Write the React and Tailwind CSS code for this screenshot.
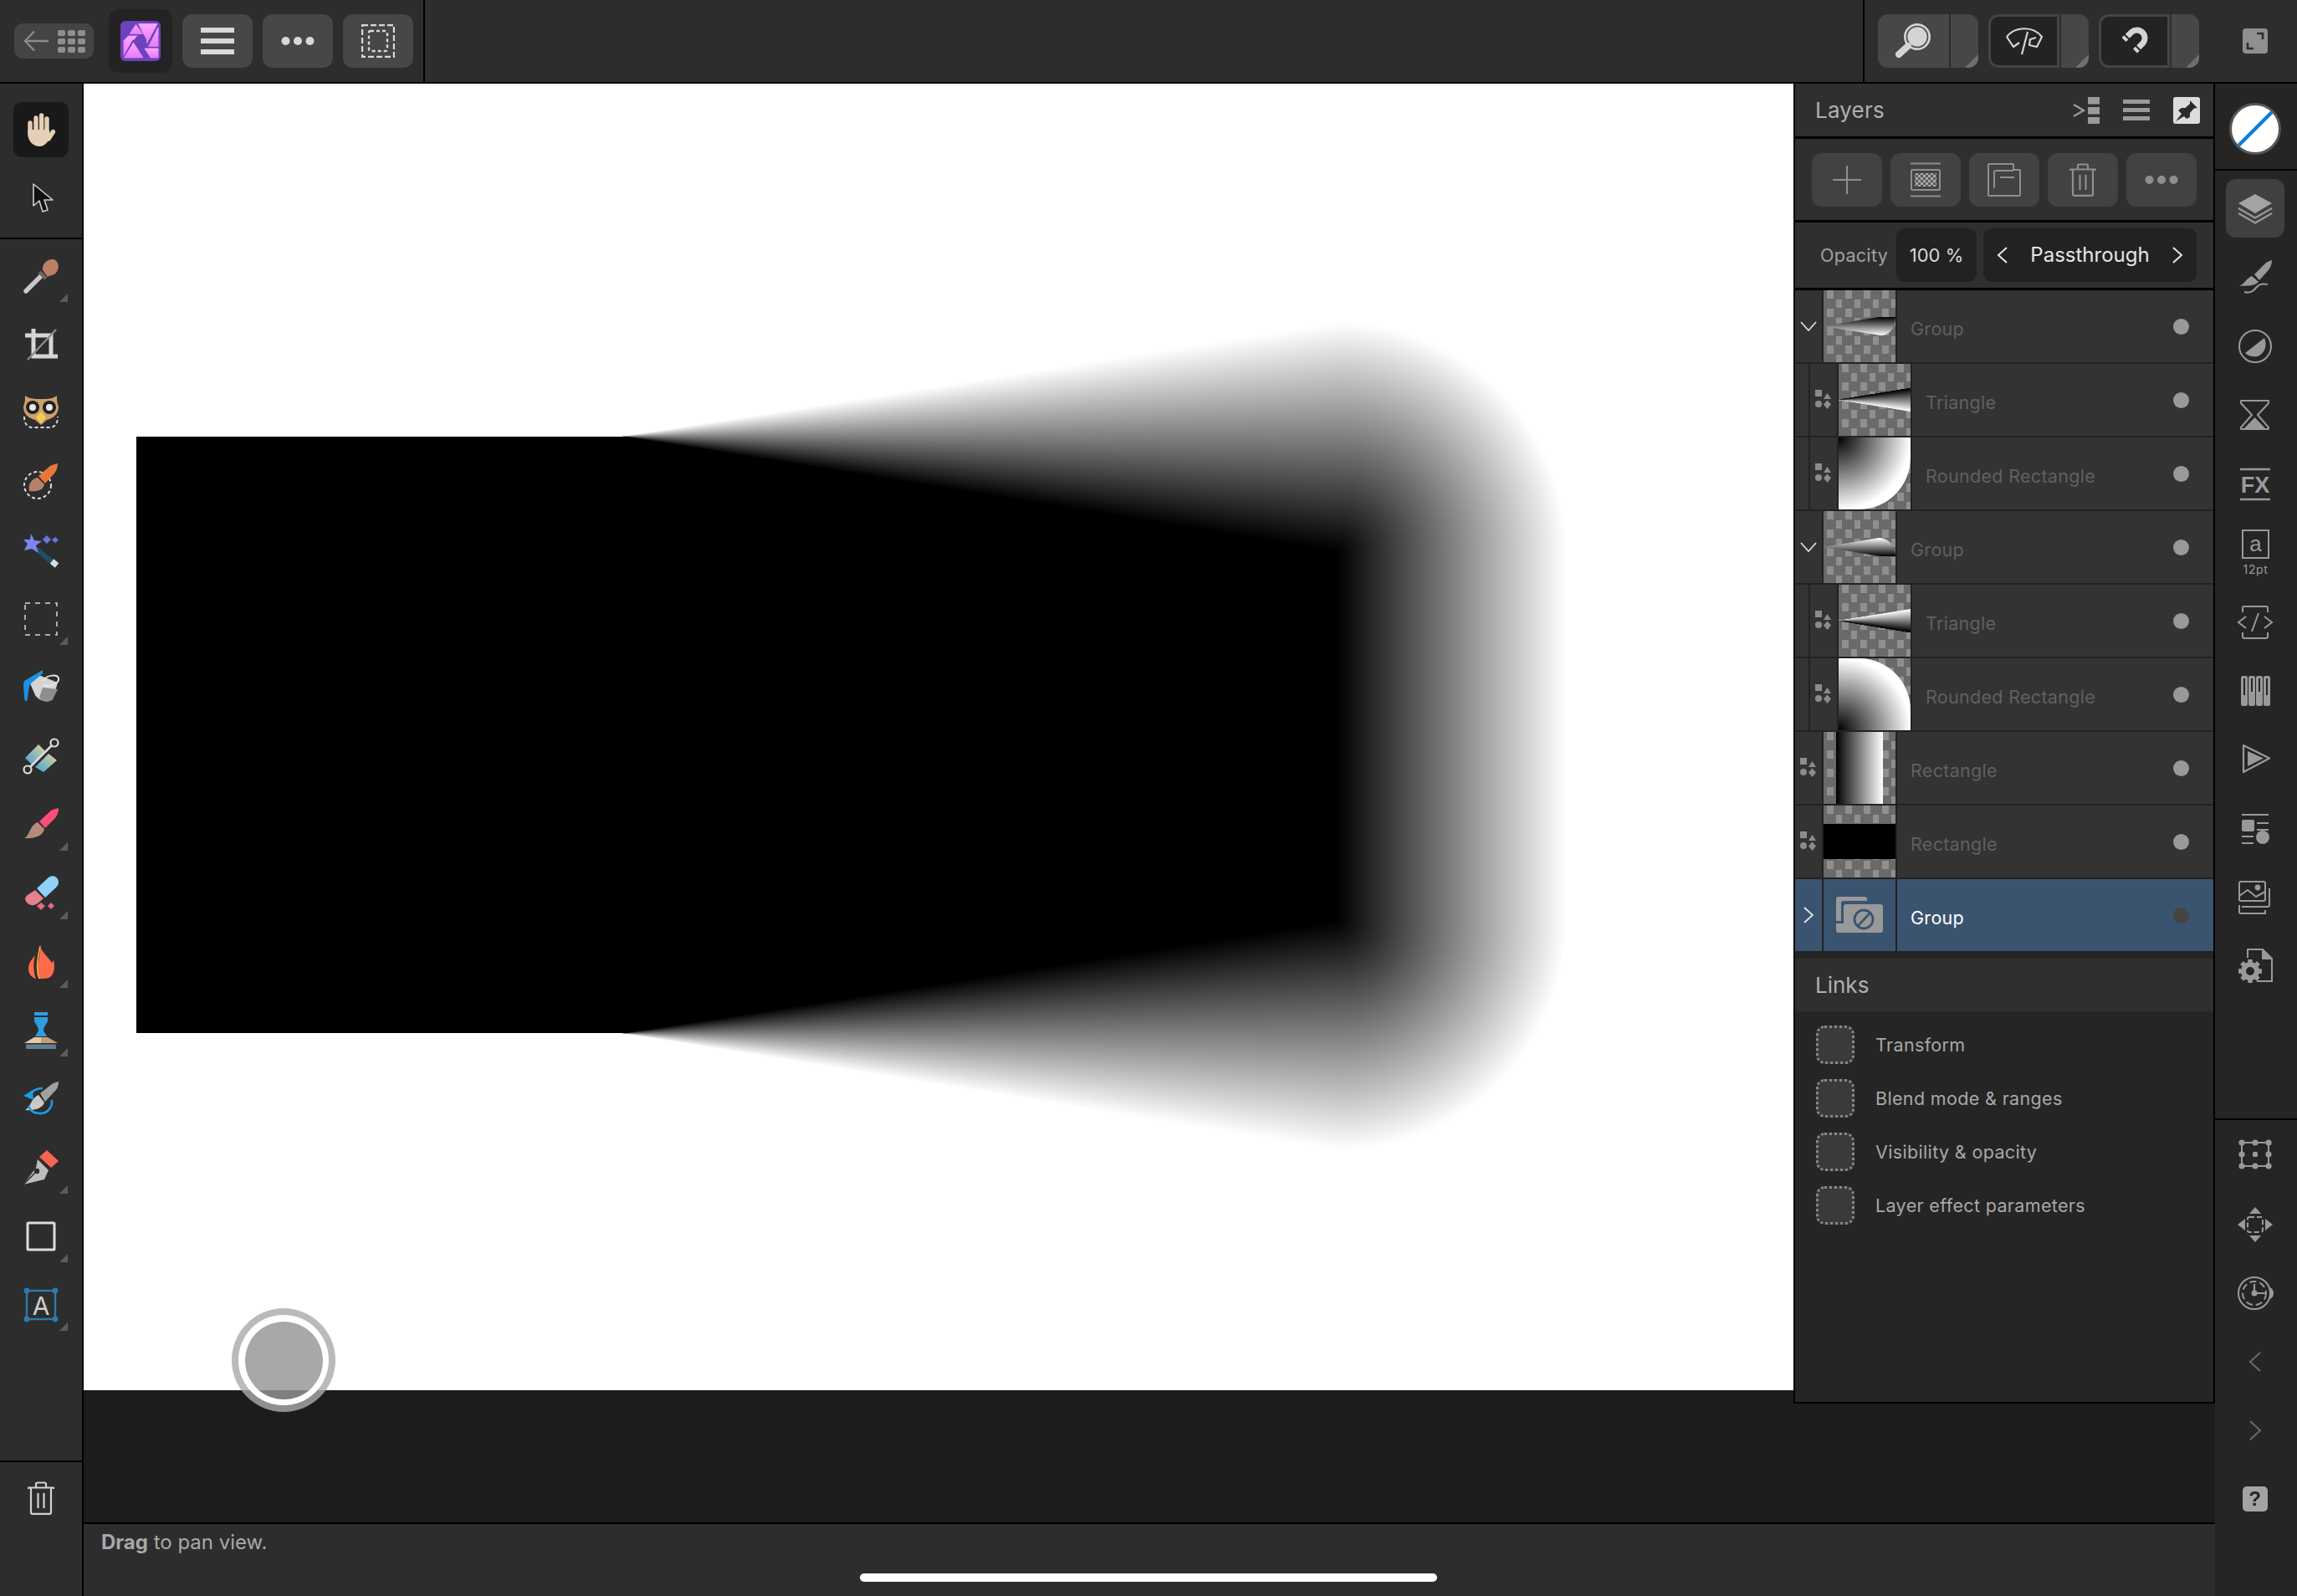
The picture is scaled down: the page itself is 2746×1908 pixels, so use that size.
import React from "react";

const lerp = (a, b, t) => Math.round(a + (b - a) * t);
const gray = (v) => `rgb(${v},${v},${v})`;

function Wedge({ tip, x, y1, y2, c1 = 0, c2 = 255, n = 120 }) {
  const out = [];
  for (let i = n - 1; i >= 0; i--) {
    const b = y1 + ((y2 - y1) * (i + 1)) / n;
    const col = gray(lerp(c1, c2, (i + 0.5) / n));
    out.push(<polygon key={i} points={`${tip[0]},${tip[1]} ${x},${b} ${x},${y1}`} fill={col} />);
  }
  return <g>{out}</g>;
}

function Artwork() {
  const R = 275;
  const X = 1598;
  const T = 660;
  const B = 1100;
  return (
    <svg className="block w-full h-full" viewBox="100 100 2044 1562">
      <defs>
        <radialGradient id="cT" gradientUnits="userSpaceOnUse" cx={X} cy={T} r={R}>
          <stop offset="0" stopColor="#000" /><stop offset="1" stopColor="#fff" />
        </radialGradient>
        <radialGradient id="cB" gradientUnits="userSpaceOnUse" cx={X} cy={B} r={R}>
          <stop offset="0" stopColor="#000" /><stop offset="1" stopColor="#fff" />
        </radialGradient>
        <linearGradient id="cM" gradientUnits="userSpaceOnUse" x1={X} y1="0" x2={X + R} y2="0">
          <stop offset="0" stopColor="#000" /><stop offset="1" stopColor="#fff" />
        </linearGradient>
      </defs>
      <rect x="100" y="100" width="2044" height="1562" fill="#fff" />
      <Wedge tip={[744, 522]} x={X} y1={T} y2={T - R} n={255} />
      <Wedge tip={[744, 1235]} x={X} y1={B} y2={B + R} n={255} />
      <path d={`M${X} ${T}V${T - R}A${R} ${R} 0 0 1 ${X + R} ${T}Z`} fill="url(#cT)" />
      <path d={`M${X} ${B}V${B + R}A${R} ${R} 0 0 0 ${X + R} ${B}Z`} fill="url(#cB)" />
      <rect x={X} y={T} width={R} height={B - T} fill="url(#cM)" />
      <polygon points={`163,522 744,522 ${X},${T} ${X},${B} 744,1235 163,1235`} fill="#000" />
    </svg>
  );
}

function Corner() {
  return (
    <svg className="absolute left-[71px] top-[62px]" width="10" height="10" viewBox="0 0 10 10">
      <polygon points="10,0 10,10 0,10" fill="#5c5c5c" />
    </svg>
  );
}

function Tool({ children, corner, className = "" }) {
  return (
    <div className={`relative h-[82px] w-full flex items-center justify-center ${className}`}>
      {children}
      {corner && <Corner />}
    </div>
  );
}

const I = ({ children, s = 44, vb, className = "" }) => (
  <svg width={s} height={s} viewBox={vb || `0 0 ${s} ${s}`} fill="none" className={className}>{children}</svg>
);

/* left tools */
const Hand = () => (
  <svg width="33" height="40" viewBox="0 0 33 40">
    <g stroke="#e5cfb8" strokeWidth="5.4" strokeLinecap="round">
      <path d="M3 12V26M10 6V26M16.6 3V26M23 7V26M25 31L30.5 22.5" />
    </g>
    <path d="M.5 20V26C.5 34 7 40 14.5 40C21 40 24 34 27.5 29L25.8 20Z" fill="#e5cfb8" />
  </svg>
);
const Cursor = () => (
  <svg width="28" height="38" viewBox="0 0 28 38" className="ml-[3px]">
    <path d="M3 2V28L10 22L14 35L20 33L16 21H26Z" fill="#111" stroke="#d0d0d0" strokeWidth="1.6" strokeLinejoin="round" />
  </svg>
);
const Picker = () => (
  <I s={44}>
    <path d="M4 40L23 21" stroke="#c8c8c8" strokeWidth="5.5" strokeLinecap="round" />
    <path d="M20 17L28 25" stroke="#666" strokeWidth="4.5" />
    <path d="M24 15C23 7 30 1 37 2C43 4 45 12 40 18C37 22 32 21 30 23Z" fill="#bb7f63" />
  </I>
);
const Crop = () => (
  <I s={44}>
    <path d="M3 11H34V34M13 3V36H42" stroke="#d6d6d6" strokeWidth="5" />
    <path d="M6 40L40 4" stroke="#8c8c8c" strokeWidth="2.4" />
  </I>
);
const Owl = () => (
  <I s={44}>
    <path d="M3 1C8 5 14 5 22 5C30 5 36 5 41 1C41 6 41 9 43 14C43 24 36 28 29 30L22 36L15 30C8 28 1 24 1 14C3 9 3 6 3 1Z" fill="#cf9f6c" />
    <circle cx="12" cy="15" r="8" fill="#222" /><circle cx="32" cy="15" r="8" fill="#222" />
    <circle cx="12" cy="15" r="4" fill="#e8e8e8" /><circle cx="32" cy="15" r="4" fill="#e8e8e8" />
    <path d="M16 27L22 20L28 27L22 34Z" fill="#efce4f" />
    <path d="M2 26C2 35 6 39 12 39H32C38 39 42 35 42 26" stroke="#ddd" strokeWidth="2" strokeDasharray="4 3" />
  </I>
);
const BrushSel = () => (
  <I s={44}>
    <circle cx="18" cy="26" r="16" stroke="#ddd" strokeWidth="2" strokeDasharray="4 3" />
    <path d="M19 15L33 3C37 1 42 0 42 0C42 4 41 8 38 12L27 24Z" fill="#e8763a" />
    <path d="M18 17L26 25C25 32 17 34 8 33C6 25 11 18 18 17Z" fill="#b9806a" />
  </I>
);
const Wand = () => (
  <I s={44}>
    <path d="M16 20L38 38" stroke="#1f4f68" strokeWidth="6" />
    <path d="M35 35L41 40" stroke="#ddd" strokeWidth="7" />
    <path d="M10 2L14 10L23 11L16 16L19 25L11 20L2 22L6 14L1 9L9 9Z" fill="#7c86f2" />
    <path d="M29 4L34 9L29 14L24 9Z M39 6L43 9.5L39 13L35 9.5Z" fill="#6a74e6" />
  </I>
);
const Marquee = () => (
  <svg width="40" height="40" viewBox="0 0 40 40" fill="none">
    <rect x="1" y="1" width="38" height="38" stroke="#d8d8d8" strokeWidth="1.5" strokeDasharray="6 6" />
  </svg>
);
const Fill = () => (
  <I s={44}>
    <path d="M17 6L42 16L36 36C30 41 20 38 15 31L9 17Z" fill="#d4d4d4" />
    <path d="M24 22L42 24L36 36C30 41 22 38 20 34Z" fill="#8e8e8e" />
    <path d="M24 14C30 6 42 6 43 11C44 16 34 22 24 19" stroke="#e4e4e4" strokeWidth="2" />
    <path d="M24 1L2 14C0 18 2 28 2 32C2 38 4 40 5 38C7 34 6 26 9 18L24 5Z" fill="#1b92e4" />
  </I>
);
const Heal = () => (
  <I s={44}>
    <defs>
      <linearGradient id="hA" x1="1" y1="0" x2="0" y2="1"><stop offset="0" stopColor="#ecd39b" /><stop offset="1" stopColor="#3aa0d8" /></linearGradient>
    </defs>
    <path d="M3 24L19 8L28 17L12 33Z" fill="url(#hA)" />
    <path d="M15 35L31 19L41 27L25 41Z" fill="url(#hA)" />
    <path d="M9 35L35 9" stroke="#ddd" strokeWidth="2.5" />
    <circle cx="38" cy="6" r="4.5" stroke="#ddd" strokeWidth="2.2" fill="#2d2d2d" />
    <circle cx="6" cy="38" r="4.5" stroke="#ddd" strokeWidth="2.2" fill="#2d2d2d" />
  </I>
);
const Brush = () => (
  <I s={44}>
    <path d="M20 18L34 5C38 3 43 2 43 2C43 6 42 11 38 15L27 26Z" fill="#fb4e7a" />
    <path d="M18 19L26 27C25 35 14 39 2 38C9 35 8 23 18 19Z" fill="#b58a78" />
  </I>
);
const Eraser = () => (
  <I s={44}>
    <path d="M17 16L31 3C35 0 40 1 42 5C44 9 43 12 40 15L27 27Z" fill="#8fd1fb" />
    <path d="M15 18L25 28L18 34C14 37 9 37 5 33C2 29 3 26 6 24Z" fill="#e67f90" />
    <path d="M22 33L27 37L22 42L17 37Z M34 33L38 37L34 41L30 37Z" fill="#e2697f" />
  </I>
);
const Flame = () => (
  <svg width="32" height="40" viewBox="0 0 32 40" fill="none">
    <path d="M15 0C16 8 25 14 29 21L31 18C33 26 32 34 27 38C24 40 18 40 14 40C12 36 11 28 13 20C14 13 16 7 15 0Z" fill="#ff6a4c" />
    <path d="M10 8C10 14 1 18 1 28C1 34 5 39 10 40C7 32 6 20 10 8Z" fill="#ff6a4c" />
    <path d="M15 1C13 12 9 28 14 40" stroke="#f4a23a" strokeWidth="1.8" />
  </svg>
);
const Stamp = () => (
  <I s={44}>
    <path d="M14 0H30V4H14Z M14 6H30V11C27 16 25 19 25 21C25 24 28 26 29 29H15C16 26 19 24 19 21C19 19 17 16 14 11Z" fill="#2f9ee0" />
    <path d="M14 30H22V37H2Z" fill="#e3c9ab" /><path d="M22 30H30L42 37H22Z" fill="#c69e77" />
    <rect x="4" y="38.5" width="36" height="5.5" rx="1.5" fill="#5f7f99" />
  </I>
);
const Undo = () => (
  <I s={44}>
    <path d="M21 15L35 4C38 2 43 1 43 1C43 5 42 10 38 13L27 25Z" fill="#a0a0a0" />
    <path d="M19 17L26 26C24 33 14 36 3 35C10 32 9 22 19 17Z" fill="#c9c9c9" />
    <path d="M35 23C36 31 30 40 20 39C14 39 9 36 7 30M11 14C15 10 20 9 24 9" stroke="#189ee8" strokeWidth="2.6" />
    <path d="M1 18L12 11L13 23Z" fill="#189ee8" />
  </I>
);
const Pen = () => (
  <I s={44}>
    <path d="M29 1L43 14L34 22L20 9Z" fill="#f6654f" />
    <path d="M18 12L31 25L26 36L1 42L16 22Z" fill="#bdbdbd" />
    <path d="M1 42L16 27" stroke="#2d2d2d" strokeWidth="1.6" />
    <circle cx="17" cy="26" r="3.2" fill="#2d2d2d" />
  </I>
);
const RectT = () => (
  <svg width="36" height="36" viewBox="0 0 36 36" fill="none"><rect x="2" y="2" width="32" height="32" rx="1" stroke="#ddd" strokeWidth="3" /></svg>
);
const TextT = () => (
  <svg width="42" height="42" viewBox="0 0 42 42" fill="none">
    <rect x="4" y="4" width="34" height="34" stroke="#2a7bab" strokeWidth="2.4" />
    <g fill="#2a7bab"><circle cx="4" cy="4" r="3.4" /><circle cx="38" cy="4" r="3.4" /><circle cx="4" cy="38" r="3.4" /><circle cx="38" cy="38" r="3.4" /></g>
    <text x="21" y="33" textAnchor="middle" fontFamily="Inter, sans-serif" fontSize="30" fill="#ccc">A</text>
  </svg>
);
const Trash = ({ c = "#d2d2d2" }) => (
  <svg width="32" height="40" viewBox="0 0 32 40" fill="none" stroke={c} strokeWidth="2.2" strokeLinejoin="round">
    <path d="M1 9V7.5H31V9" /><path d="M10 7V3C10 2 11 1.5 12 1.5H20C21 1.5 22 2 22 3V7" />
    <path d="M4 8V37C4 38 5 38.8 6 38.8H26C27 38.8 28 38 28 37V8" /><path d="M12.5 14V32M19.5 14V32" />
  </svg>
);

/* right column */
const Ic = ({ children }) => <svg width="44" height="44" viewBox="0 0 44 44" fill="none">{children}</svg>;
const c = "#999";
const RLayers = () => (
  <Ic>
    <path d="M22 5L42 16L22 28L2 16Z" fill="#a3a3a3" />
    <path d="M2 22L22 33.5L42 22M2 28L22 39.5L42 28" stroke={c} strokeWidth="2.2" />
  </Ic>
);
const RBrush = () => (
  <Ic>
    <path d="M21 18L34 5C38 2 42 1 42 1C42 6 40 11 36 15L27 25Z" fill={c} />
    <path d="M18 20L26 27C20 33 11 31 3 32C10 29 11 23 18 20Z" fill={c} />
    <path d="M9 39C16 41 20 38 24 33C27 29 32 29 37 30" stroke={c} strokeWidth="2.2" />
  </Ic>
);
const RAdjust = () => (
  <Ic>
    <circle cx="22" cy="22" r="19" stroke={c} strokeWidth="2" />
    <path d="M10 30L33 12C37 21 33 31 25 34C19 35 14 34 10 30Z" fill={c} />
  </Ic>
);
const RGlass = () => (
  <Ic>
    <path d="M5 5H38L38 8L25 22L38 37V39H5V37L18 22L5 8Z" stroke={c} strokeWidth="2" strokeLinejoin="round" />
    <path d="M21.5 25L34 38H9Z" fill={c} />
  </Ic>
);
const RFx = () => (
  <Ic>
    <path d="M4 4H40M4 40H40" stroke={c} strokeWidth="2.4" />
    <text x="22" y="32" textAnchor="middle" fontFamily="Liberation Sans, sans-serif" fontWeight="700" fontSize="27" fill={c}>FX</text>
  </Ic>
);
const RType = () => (
  <svg width="44" height="56" viewBox="0 0 44 56" fill="none">
    <rect x="7" y="1" width="31" height="33" stroke={c} strokeWidth="2" />
    <text x="22.5" y="26" textAnchor="middle" fontFamily="Liberation Sans, sans-serif" fontSize="26" fill={c}>a</text>
    <text x="22.5" y="53" textAnchor="middle" fontFamily="Inter, sans-serif" fontSize="14" letterSpacing="0.6" fill={c}>12pt</text>
  </svg>
);
const RCode = () => (
  <Ic>
    <path d="M7 10V5C7 4 8 3 9 3H35C36 3 37 4 37 5V10M7 34V39C7 40 8 41 9 41H35C36 41 37 40 37 39V34" stroke={c} strokeWidth="2" />
    <path d="M11 15L2 22L11 29M33 15L42 22L33 29M26 11L18 33" stroke={c} strokeWidth="2" />
  </Ic>
);
const RPiano = () => (
  <Ic>
    <g fill={c}>
      <rect x="5" y="4" width="8" height="36" rx="2.5" /><rect x="14" y="4" width="8" height="36" rx="2.5" /><rect x="23" y="4" width="8" height="36" rx="2.5" /><rect x="32" y="4" width="8" height="36" rx="2.5" />
    </g>
    <g fill="#252525"><rect x="8" y="7" width="2" height="20" /><rect x="17" y="7" width="2" height="16" /><rect x="26" y="7" width="2" height="16" /><rect x="35" y="7" width="2" height="20" /></g>
  </Ic>
);
const RPlay = () => (
  <Ic>
    <path d="M8 5L39 20.5L8 37Z" stroke={c} strokeWidth="2.2" strokeLinejoin="round" />
    <path d="M13 12L32 20.5L13 30Z" fill={c} />
  </Ic>
);
const RLayout = () => (
  <Ic>
    <path d="M6 5H38M24 15H38M24 23H38M6 31H20M6 39H20" stroke={c} strokeWidth="2" />
    <rect x="6" y="11" width="15" height="14" rx="2" fill={c} /><circle cx="31" cy="32" r="8" fill={c} />
  </Ic>
);
const RImage = () => (
  <Ic>
    <rect x="3" y="3" width="31" height="23" rx="2" stroke={c} strokeWidth="2" />
    <path d="M3 20L13 13L23 21L34 15" stroke={c} strokeWidth="2" />
    <circle cx="25" cy="10" r="3.4" fill={c} />
    <path d="M39 11V31C39 32 38 33 37 33H6M3 31V39C3 40 4 41 5 41H34V37" stroke={c} strokeWidth="2" />
  </Ic>
);
const RGear = () => (
  <Ic>
    <path d="M13 12V2H31L42 13V40H24" stroke={c} strokeWidth="2" />
    <path d="M31 2V13H42" fill={c} stroke={c} strokeWidth="2" strokeLinejoin="round" />
    <circle cx="16" cy="28" r="8" stroke={c} strokeWidth="6" />
    <g stroke={c} strokeWidth="5.5"><path d="M16 14V42M2 28H30M6 18L26 38M26 18L6 38" strokeDasharray="4 20" /></g>
  </Ic>
);
const RTransform = () => (
  <Ic>
    <rect x="6" y="6" width="32" height="28" stroke={c} strokeWidth="2" />
    <g fill={c}>
      <circle cx="6" cy="6" r="3.6" /><circle cx="22" cy="6" r="3.6" /><circle cx="38" cy="6" r="3.6" />
      <circle cx="6" cy="20" r="3.6" /><circle cx="38" cy="20" r="3.6" />
      <circle cx="6" cy="34" r="3.6" /><circle cx="22" cy="34" r="3.6" /><circle cx="38" cy="34" r="3.6" />
      <rect x="19" y="17" width="6" height="6" rx="1.5" />
    </g>
  </Ic>
);
const RMove = () => (
  <Ic>
    <path d="M22 1L29 9H15ZM22 43L15 35H29ZM1 22L10 15V29ZM43 22L34 15V29Z" fill={c} />
    <rect x="13" y="13" width="18" height="18" rx="2" stroke={c} strokeWidth="2" strokeDasharray="6 3" />
  </Ic>
);
const RClock = () => (
  <Ic>
    <circle cx="21" cy="22" r="19" stroke={c} strokeWidth="2" />
    <circle cx="21" cy="22" r="14" stroke={c} strokeWidth="2" strokeDasharray="8 4" />
    <path d="M21 11V22H34" stroke={c} strokeWidth="2.2" /><circle cx="21" cy="22" r="3.5" fill={c} />
    <path d="M40 15C43 17 44 19 44 22C44 25 43 27 40 29Z" fill={c} />
  </Ic>
);
const RChevL = () => <svg width="16" height="24" viewBox="0 0 16 24" fill="none"><path d="M14 1L2 12L14 23" stroke="#6a6a6a" strokeWidth="2" /></svg>;
const RChevR = () => <svg width="16" height="24" viewBox="0 0 16 24" fill="none"><path d="M2 1L14 12L2 23" stroke="#6a6a6a" strokeWidth="2" /></svg>;
const RHelp = () => (
  <div className="w-[30px] h-[30px] rounded-[5px] bg-[#a3a3a3] flex items-center justify-center text-[#252525] text-[24px] font-bold leading-none font-['Liberation_Sans',sans-serif]">?</div>
);

/* top bar icons */
const Logo = () => (
  <svg width="48" height="48" viewBox="0 0 48 48">
    <defs>
      <linearGradient id="logoP" x1="0" y1="0" x2="0" y2="1"><stop offset="0" stopColor="#fba6ff" /><stop offset="1" stopColor="#e97af7" /></linearGradient>
    </defs>
    <rect width="48" height="48" rx="6" fill="#6c42bd" />
    <g fill="url(#logoP)" stroke="url(#logoP)" strokeWidth="0.8" strokeLinejoin="round">
      <polygon points="18.5,4.5 26.5,15.5 11,15.5" />
      <polygon points="21.5,3.5 44,3.5 31.5,27 29,18 " />
      <polygon points="45,8 45,30.5 33.5,30.5" />
      <polygon points="29,33 45,33 45,44 36,44" />
      <polygon points="15.5,26 27,44 4.5,44" />
      <polygon points="4,23.5 9.5,18 21,18 17.5,21.5 14,23 4,41" />
    </g>
    <circle cx="24" cy="24" r="6.5" fill="none" stroke="#6c42bd" strokeWidth="1.4" />
  </svg>
);
const BackGrid = () => (
  <div className="w-[95px] h-[42px] rounded-[10px] bg-[#444] flex items-center pl-[11px] gap-[11px] shrink-0">
    <svg width="30" height="26" viewBox="0 0 30 26" fill="none"><path d="M30 13H2M13 1.5L2 13L13 24.5" stroke="#8a8a8a" strokeWidth="2.4" /></svg>
    <div className="grid grid-cols-3 gap-[3px]">
      {Array.from({ length: 9 }).map((_, i) => <div key={i} className="w-[9px] h-[7px] rounded-[2px] bg-[#8f8f8f]" />)}
    </div>
  </div>
);
const TopBtn = ({ children }) => (
  <div className="w-[84px] h-[64px] rounded-[12px] bg-[#474747] flex items-center justify-center shrink-0">{children}</div>
);
const Combo = ({ children, active }) => (
  <div className="w-[120px] h-[64px] flex gap-[2px] shrink-0">
    <div className={`w-[85px] h-full rounded-l-[12px] flex items-center justify-center ${active ? "bg-[#232323] border-[3px] border-[#444]" : "bg-[#474747]"}`}>{children}</div>
    <div className="relative flex-1 rounded-r-[12px] bg-[#474747] overflow-hidden">
      <svg className="absolute right-0 bottom-0" width="16" height="16" viewBox="0 0 16 16"><polygon points="16,0 16,16 0,16" fill="#6e6e6e" /></svg>
    </div>
  </div>
);
const Dots = ({ col }) => (
  <svg width="40" height="12" viewBox="0 0 40 12"><g fill={col}><circle cx="5.5" cy="6" r="5" /><circle cx="20" cy="6" r="5" /><circle cx="34.5" cy="6" r="5" /></g></svg>
);

function TopBar() {
  return (
    <div className="h-[100px] shrink-0 bg-[#2d2d2d] border-b-2 border-black flex items-stretch">
      <div className="flex items-center pl-[17px] pr-[12px] border-r-2 border-black">
        <BackGrid />
        <div className="ml-[18px] w-[76px] h-[76px] rounded-[12px] bg-[#232323] flex items-center justify-center shrink-0"><Logo /></div>
        <div className="ml-[12px] flex gap-[12px]">
          <TopBtn>
            <div className="w-[40px] flex flex-col gap-[7px]">
              <div className="h-[6px] bg-[#d8d8d8]" /><div className="h-[6px] bg-[#d8d8d8]" /><div className="h-[6px] bg-[#d8d8d8]" />
            </div>
          </TopBtn>
          <TopBtn><Dots col="#d8d8d8" /></TopBtn>
          <TopBtn>
            <svg width="40" height="40" viewBox="0 0 40 40" fill="none" stroke="#d8d8d8">
              <rect x="1" y="1" width="38" height="38" strokeWidth="2.4" strokeDasharray="7 3" />
              <rect x="9" y="8" width="22" height="24" rx="2" strokeWidth="2.4" strokeDasharray="4 3" />
            </svg>
          </TopBtn>
        </div>
      </div>
      <div className="flex-1" />
      <div className="flex items-center border-l-2 border-black pl-[16px]">
        <div className="flex gap-[12px]">
          <Combo>
            <svg width="44" height="44" viewBox="0 0 44 44" fill="none">
              <circle cx="26" cy="17" r="14" fill="#d4d4d4" stroke="#d4d4d4" strokeWidth="4" />
              <circle cx="26" cy="17" r="12.5" stroke="#474747" strokeWidth="1.6" />
              <path d="M15 28L4 38" stroke="#d4d4d4" strokeWidth="8" strokeLinecap="round" />
            </svg>
          </Combo>
          <Combo active>
            <svg width="44" height="34" viewBox="0 0 44 34" fill="none" stroke="#d4d4d4" strokeWidth="2.2">
              <path d="M1 12C10 0 32 -2 43 12L37 24L28 22L29 15L36 13M1 12L9 24L16 19" strokeLinejoin="round" />
              <path d="M26 6L19 33" />
            </svg>
          </Combo>
          <Combo active>
            <svg width="34" height="34" viewBox="0 0 34 34" fill="none">
              <path d="M4 15.5L13.3 6.3A9.5 9.5 0 0 1 26.7 19.7L17.5 29" stroke="#d4d4d4" strokeWidth="7" />
              <path d="M4 8.5L11 15.5M17.5 22L24.5 29" stroke="#232323" strokeWidth="2" />
            </svg>
          </Combo>
        </div>
        <div className="ml-[52px] mr-[35px] w-[30px] h-[30px] rounded-[4px] bg-[#8f8f8f] flex items-center justify-center">
          <svg width="22" height="22" viewBox="0 0 22 22" fill="none" stroke="#2d2d2d" strokeWidth="2.6"><path d="M13 2H20V9M2 13V20H9" /></svg>
        </div>
      </div>
    </div>
  );
}

function LeftBar() {
  return (
    <div className="w-[100px] shrink-0 bg-[#2d2d2d] border-r-2 border-black flex flex-col">
      <div className="pt-[14px] pb-[6px] border-b-2 border-black">
        <Tool><div className="w-[66px] h-[66px] rounded-[10px] bg-[#191919] flex items-center justify-center"><Hand /></div></Tool>
        <Tool><Cursor /></Tool>
      </div>
      <div className="flex-1 pt-[3px]">
        <Tool corner><Picker /></Tool>
        <Tool><Crop /></Tool>
        <Tool><Owl /></Tool>
        <Tool><BrushSel /></Tool>
        <Tool><Wand /></Tool>
        <Tool corner><Marquee /></Tool>
        <Tool><Fill /></Tool>
        <Tool><Heal /></Tool>
        <Tool corner><Brush /></Tool>
        <Tool corner><Eraser /></Tool>
        <Tool corner><Flame /></Tool>
        <Tool corner><Stamp /></Tool>
        <Tool><Undo /></Tool>
        <Tool corner><Pen /></Tool>
        <Tool corner><RectT /></Tool>
        <Tool corner><TextT /></Tool>
      </div>
      <div className="h-[162px] shrink-0 border-t-2 border-black pt-[2px]">
        <Tool><Trash /></Tool>
      </div>
    </div>
  );
}

function RightBar() {
  const top = [RBrush, RAdjust, RGlass, RFx, RType, RCode, RPiano, RPlay, RLayout, RImage, RGear];
  const bottom = [RTransform, RMove, RClock, RChevL, RChevR, RHelp];
  return (
    <div className="w-[98px] shrink-0 bg-[#252525] flex flex-col pr-[3px]">
      <div className="h-[104px] -mr-[3px] pr-[3px] shrink-0 pt-[5px] border-b-2 border-black flex items-center justify-center">
        <div className="w-[62px] h-[62px] rounded-full bg-white border-[3px] border-[#555] overflow-hidden">
          <svg width="56" height="56" viewBox="0 0 56 56"><path d="M5 51L51 5" stroke="#0c80d6" strokeWidth="4.4" /></svg>
        </div>
      </div>
      <div className="flex-1 pt-[4px] flex flex-col items-center">
        <div className="h-[82.4px] flex items-center justify-center shrink-0">
          <div className="w-[70px] h-[70px] rounded-[12px] bg-[#404040] flex items-center justify-center"><RLayers /></div>
        </div>
        {top.map((Ico, i) => (
          <div key={i} className="h-[82.4px] flex items-center justify-center shrink-0"><Ico /></div>
        ))}
      </div>
      <div className="h-[571px] -mr-[3px] pr-[3px] shrink-0 border-t-2 border-black pt-[2px] flex flex-col items-center">
        {bottom.map((Ico, i) => (
          <div key={i} className="h-[82px] flex items-center justify-center shrink-0"><Ico /></div>
        ))}
      </div>
    </div>
  );
}

/* thumbnails */
const Check = ({ children, id }) => (
  <svg width="86" height="86" viewBox="0 0 86 86" className="block shrink-0">
    <defs>
      <pattern id={id} width="22" height="22" patternUnits="userSpaceOnUse">
        <rect width="22" height="22" fill="#6a6a6a" />
        <rect x="4" y="0" width="8" height="10" fill="#8f8f8f" />
        <rect x="15" y="11" width="8" height="10" fill="#8f8f8f" />
      </pattern>
    </defs>
    <rect width="86" height="86" fill={`url(#${id})`} />
    {children}
  </svg>
);
const Thumbs = {
  g1: (
    <Check id="p1">
      <defs><linearGradient id="g1a" x1="0" y1="0" x2="0" y2="1"><stop offset="0" stopColor="#000" /><stop offset="1" stopColor="#fff" /></linearGradient></defs>
      <path d="M0 43L66 32H86C86 46 78 54 68 54Z" fill="url(#g1a)" />
    </Check>
  ),
  t1: <Check id="p2"><Wedge tip={[0, 43]} x={86} y1={29} y2={57} n={40} /></Check>,
  r1: (
    <Check id="p3">
      <defs><radialGradient id="r1a" gradientUnits="userSpaceOnUse" cx="0" cy="0" r="86"><stop offset="0" stopColor="#000" /><stop offset="1" stopColor="#fff" /></radialGradient></defs>
      <path d="M0 0H86V24A62 62 0 0 1 26 86H0Z" fill="url(#r1a)" />
    </Check>
  ),
  g2: (
    <Check id="p4">
      <defs><linearGradient id="g2a" x1="0" y1="0" x2="0" y2="1"><stop offset="0" stopColor="#fff" /><stop offset="1" stopColor="#000" /></linearGradient></defs>
      <path d="M0 43L66 32C78 32 86 42 86 54H68Z" fill="url(#g2a)" />
    </Check>
  ),
  t2: <Check id="p5"><Wedge tip={[0, 43]} x={86} y1={57} y2={29} n={40} /></Check>,
  r2: (
    <Check id="p6">
      <defs><radialGradient id="r2a" gradientUnits="userSpaceOnUse" cx="0" cy="86" r="86"><stop offset="0" stopColor="#000" /><stop offset="1" stopColor="#fff" /></radialGradient></defs>
      <path d="M0 86H86V62A62 62 0 0 0 26 0H0Z" fill="url(#r2a)" />
    </Check>
  ),
  rc1: (
    <Check id="p7">
      <defs><linearGradient id="rc1a" x1="0" y1="0" x2="1" y2="0"><stop offset="0" stopColor="#000" /><stop offset="1" stopColor="#fff" /></linearGradient></defs>
      <rect x="15" y="0" width="56" height="86" fill="url(#rc1a)" />
    </Check>
  ),
  rc2: <Check id="p8"><rect x="0" y="22" width="86" height="42" fill="#000" /></Check>,
  folder: (
    <svg width="86" height="86" viewBox="0 0 86 86" className="block shrink-0" fill="none">
      <path d="M15 50V24C15 22 16 21 18 21H49C51 21 52 22 52 24V26H24C22 26 21 27 21 29V50Z" fill="#999" />
      <path d="M15 50V60C15 63 16 64 18 64H68C70 64 71 63 71 61V33C71 31 70 30 68 30H27C25 30 24 31 24 33V53H15Z" fill="#999" />
      <circle cx="48" cy="48" r="11" stroke="#3a546f" strokeWidth="2.8" />
      <path d="M41 56L56 40" stroke="#3a546f" strokeWidth="2.8" />
    </svg>
  ),
};

const Shapes = () => (
  <svg width="20" height="24" viewBox="0 0 20 24">
    <g fill="#8c8c8c">
      <rect x="0" y="0" width="8" height="8" />
      <polygon points="14.5,4 19,11 10,11" />
      <circle cx="4" cy="17" r="4" />
      <polygon points="14.5,12.5 19,17.5 14.5,23 10,17.5" />
    </g>
  </svg>
);
const ChevD = () => <svg width="20" height="12" viewBox="0 0 20 12" fill="none"><path d="M1 1L10 11L19 1" stroke="#dcdcdc" strokeWidth="1.8" /></svg>;
const ChevR = () => <svg width="12" height="20" viewBox="0 0 12 20" fill="none"><path d="M1 1L11 10L1 19" stroke="#e6e6e6" strokeWidth="1.8" /></svg>;

function LayerRow({ name, thumb, indent, expanded, selected, shape }) {
  const cell = selected ? "bg-[#3a546f]" : "bg-[#333]";
  return (
    <div className="h-[88px] flex gap-[2px] pb-[2px] bg-[#222]">
      {indent && <div className={`w-[16px] ${cell}`} />}
      <div className={`w-[32px] flex items-center justify-center ${cell}`}>
        {expanded && <ChevD />}
        {shape && <Shapes />}
        {selected && <ChevR />}
      </div>
      <div className={cell}>{thumb}</div>
      <div className={`flex-1 flex items-center pl-[16px] pr-[29px] ${cell}`}>
        <span className={`flex-1 pt-[7px] text-[21.5px] tracking-[0.3px] ${selected ? "text-white" : "text-[#606060]"}`}>{name}</span>
        <div className={`w-[19px] h-[19px] rounded-full ${selected ? "bg-[#444]" : "bg-[#999]"}`} />
      </div>
    </div>
  );
}

const PanelBtn = ({ children }) => (
  <div className="w-[84px] h-[64px] rounded-[12px] bg-[#424242] flex items-center justify-center">{children}</div>
);

function LayersPanel() {
  const g = "#8f8f8f";
  return (
    <div className="w-[504px] h-[1578px] shrink-0 flex flex-col bg-[#252525] border-x-2 border-b-2 border-black">
      <div className="h-[66px] shrink-0 bg-[#2f2f2f] border-b-[3px] border-black flex items-center pl-[24px] pr-[16px]">
        <span className="flex-1 text-[26px] tracking-[0.2px] text-[#b0b0b0]">Layers</span>
        <div className="flex items-center gap-[28px]">
          <svg width="32" height="32" viewBox="0 0 32 32" fill="none">
            <path d="M1 9L13 16L1 23" stroke="#9a9a9a" strokeWidth="2.4" />
            <g fill="#9a9a9a"><rect x="18" y="0" width="14" height="8.5" /><rect x="18" y="12" width="14" height="8.5" /><rect x="18" y="24" width="14" height="8" /></g>
          </svg>
          <div className="w-[32px] flex flex-col gap-[5.5px]"><div className="h-[4.5px] bg-[#9a9a9a]" /><div className="h-[4.5px] bg-[#9a9a9a]" /><div className="h-[4.5px] bg-[#9a9a9a]" /></div>
          <div className="w-[32px] h-[32px] rounded-[3px] bg-[#dcdcdc] flex items-center justify-center">
            <svg width="28" height="28" viewBox="0 0 28 28"><path d="M18 2L27 11L23 11.5L18 17L18 22L14 24L4 14L8 11L12.5 11L18 6Z M8 18L1 27L11 21Z" fill="#2b2b2b" /></svg>
          </div>
        </div>
      </div>
      <div className="h-[100px] shrink-0 bg-[#2f2f2f] border-b-[3px] border-black flex items-center pl-[20px] gap-[10px]">
        <PanelBtn><svg width="34" height="34" viewBox="0 0 34 34" fill="none"><path d="M17 0V34M0 17H34" stroke={g} strokeWidth="2" /></svg></PanelBtn>
        <PanelBtn>
          <svg width="36" height="42" viewBox="0 0 36 42" fill="none">
            <defs><pattern id="dots" width="6" height="6" patternUnits="userSpaceOnUse"><rect width="6" height="6" fill="#5a5a5a" /><rect width="3" height="3" fill="#a8a8a8" /><rect x="3" y="3" width="3" height="3" fill="#a8a8a8" /></pattern></defs>
            <path d="M0 1.5H36M0 40.5H36" stroke={g} strokeWidth="2" />
            <rect x="1" y="9" width="34" height="24" rx="1.5" stroke={g} strokeWidth="2" />
            <rect x="5" y="13" width="26" height="16" fill="url(#dots)" />
          </svg>
        </PanelBtn>
        <PanelBtn>
          <svg width="40" height="40" viewBox="0 0 40 40" fill="none" stroke={g} strokeWidth="2">
            <path d="M1 38V2C1 1.5 1.5 1 2 1H30C30.5 1 31 1.5 31 2V8H38C38.5 8 39 8.5 39 9V38C39 38.5 38.5 39 38 39H2C1.5 39 1 38.5 1 38Z" />
            <path d="M8 30V11C8 10 9 9 10 9H31M15 17H32" />
          </svg>
        </PanelBtn>
        <PanelBtn><Trash c={g} /></PanelBtn>
        <PanelBtn><Dots col={g} /></PanelBtn>
      </div>
      <div className="h-[81px] shrink-0 bg-[#2f2f2f] border-b-[3px] border-black flex items-center pl-[30px]">
        <span className="text-[21.5px] tracking-[0.3px] text-[#a0a0a0] w-[91px]">Opacity</span>
        <div className="w-[96px] h-[64px] rounded-[10px] bg-[#222] flex items-center justify-center text-[22px] text-[#d8d8d8]">100 %</div>
        <div className="ml-[8px] w-[255px] h-[64px] rounded-[10px] bg-[#222] flex items-center justify-between px-[16px] text-[#e6e6e6] text-[24px]">
          <svg width="14" height="20" viewBox="0 0 14 20" fill="none"><path d="M12 1L2 10L12 19" stroke="#e6e6e6" strokeWidth="2" /></svg>
          <span>Passthrough</span>
          <svg width="14" height="20" viewBox="0 0 14 20" fill="none"><path d="M2 1L12 10L2 19" stroke="#e6e6e6" strokeWidth="2" /></svg>
        </div>
      </div>
      <div className="shrink-0">
        <LayerRow name="Group" thumb={Thumbs.g1} expanded />
        <LayerRow name="Triangle" thumb={Thumbs.t1} indent shape />
        <LayerRow name="Rounded Rectangle" thumb={Thumbs.r1} indent shape />
        <LayerRow name="Group" thumb={Thumbs.g2} expanded />
        <LayerRow name="Triangle" thumb={Thumbs.t2} indent shape />
        <LayerRow name="Rounded Rectangle" thumb={Thumbs.r2} indent shape />
        <LayerRow name="Rectangle" thumb={Thumbs.rc1} shape />
        <LayerRow name="Rectangle" thumb={Thumbs.rc2} shape />
        <LayerRow name="Group" thumb={Thumbs.folder} selected />
      </div>
      <div className="h-[7px] shrink-0" />
      <div className="h-[63px] shrink-0 bg-[#2f2f2f] flex items-center pl-[24px] text-[26px] text-[#b0b0b0]">Links</div>
      <div className="flex-1 pt-[17px] pl-[25px] flex flex-col gap-[18px]">
        {["Transform", "Blend mode & ranges", "Visibility & opacity", "Layer effect parameters"].map((t) => (
          <div key={t} className="flex items-center h-[46px]">
            <div className="w-[46px] h-[46px] rounded-[10px] bg-[#3a3a3a] border-[3px] border-dotted border-[#8a8a8a]" />
            <span className="ml-[25px] text-[21.5px] tracking-[0.35px] text-[#a8a8a8]">{t}</span>
          </div>
        ))}
      </div>
    </div>
  );
}

export default function App() {
  return (
    <div className="relative w-[2746px] h-[1908px] overflow-hidden flex flex-col bg-[#2d2d2d] font-['Inter',sans-serif]">
      <TopBar />
      <div className="flex-1 flex min-h-0">
        <LeftBar />
        <div className="flex-1 flex flex-col min-w-0">
          <div className="relative flex-1 min-h-0 flex bg-[#1c1c1c] border-b-2 border-black">
            <div className="flex-1 h-[1562px]"><Artwork /></div>
            <LayersPanel />
          </div>
          <div className="h-[86px] shrink-0 bg-[#2d2d2d] pl-[21px] pt-[4px] text-[24px] text-[#a8a8a8]">
            <span className="font-bold">Drag</span> to pan view.
          </div>
        </div>
        <RightBar />
      </div>
      {/* touch indicator */}
      <div className="absolute left-[277px] top-[1564px] w-[124px] h-[124px] rounded-full bg-[rgba(170,170,170,0.81)] flex items-center justify-center">
        <div className="w-[108px] h-[108px] rounded-full bg-white flex items-center justify-center">
          <div className="w-[93px] h-[93px] rounded-full overflow-hidden flex flex-col">
            <div className="h-[82px] bg-[#a8a8a8]" /><div className="flex-1 bg-[#7f7f7f]" />
          </div>
        </div>
      </div>
      {/* home indicator */}
      <div className="absolute left-[1028px] top-[1881px] w-[690px] h-[10px] rounded-full bg-white" />
    </div>
  );
}
